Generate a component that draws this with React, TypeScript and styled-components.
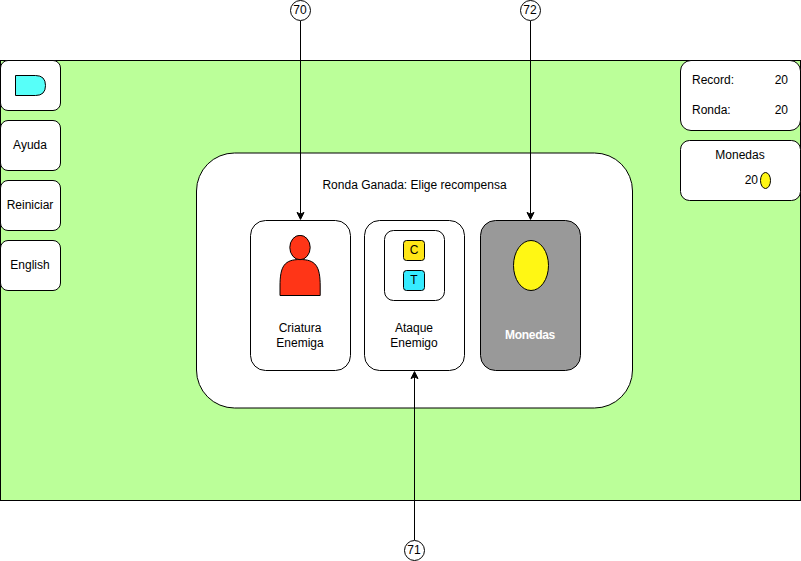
import React from "react";
import styled, { createGlobalStyle, css } from "styled-components";

const GlobalStyle = createGlobalStyle`
  *, *::before, *::after { box-sizing: border-box; }
  body {
    margin: 0;
    background: #fff;
    color: #000;
    font: 12px/15px "Liberation Sans", Arial, Helvetica, sans-serif;
    overflow: hidden;
  }
`;

const Page = styled.main`
  position: relative;
  width: 801px;
  height: 561px;
  padding-top: 60px;
`;

const Board = styled.section`
  display: grid;
  grid-template-columns: 61px 1fr 121px;
  height: 441px;
  background: #bbff99;
  box-shadow: inset 0 0 0 1px #000;
`;

const SideColumn = styled.div<{ $gap: number }>`
  display: flex;
  flex-direction: column;
  gap: ${(p) => p.$gap}px;
`;

const outlined = css`
  border: 1px solid #000;
  background: #fff;
`;

const MenuButton = styled.button`
  ${outlined}
  display: flex;
  align-items: center;
  justify-content: center;
  height: 51px;
  padding: 0 1px 1px 0;
  border-radius: 8px;
  color: inherit;
  font: inherit;
`;

const Panel = styled.div<{ $height: number; $radius: number }>`
  ${outlined}
  display: flex;
  flex-direction: column;
  height: ${(p) => p.$height}px;
  border-radius: ${(p) => p.$radius}px;
`;

const ScoreRow = styled.div`
  display: flex;
  justify-content: space-between;
  padding: 0 12px 0 11px;
  margin-top: 12px;

  & + & {
    margin-top: 15px;
  }
`;

const CoinsTitle = styled.div`
  margin-top: 7px;
  padding-right: 1px;
  text-align: center;
`;

const CoinsCount = styled.div`
  display: flex;
  justify-content: flex-end;
  gap: 2px;
  padding-right: 29px;
  margin-top: 10px;

  svg {
    margin-top: -1px;
  }
`;

const Dialog = styled.div`
  position: relative;
  isolation: isolate;
  width: 437px;
  height: 256px;
  margin: 92px 0 0 135px;
  padding: 26px 0 0 54px;

  &::before {
    ${outlined}
    content: "";
    position: absolute;
    z-index: -1;
    inset: 0;
    border-radius: 38.5px;
    transform: translateY(0.5px);
  }
`;

const DialogTitle = styled.h1`
  width: 331px;
  margin: 0;
  padding-right: 2px;
  font: inherit;
  text-align: center;
`;

const Rewards = styled.div`
  display: grid;
  grid-template-columns: 101px 101px 101px;
  column-gap: 13px;
  margin-top: 27px;
`;

const RewardCard = styled.div<{ $selected?: boolean; $shift?: number }>`
  ${outlined}
  display: flex;
  flex-direction: column;
  align-items: center;
  height: 151px;
  margin-left: ${(p) => p.$shift ?? 0}px;
  margin-right: -${(p) => p.$shift ?? 0}px;
  border-radius: 15.5px;
  ${(p) =>
    p.$selected &&
    css`
      background: #999;
      color: #fff;
      font-weight: bold;
      letter-spacing: -0.3px;
    `}
`;

const RewardArt = styled.div`
  display: flex;
  justify-content: center;
  height: 90px;
`;

const RewardLabel = styled.div<{ $single?: boolean }>`
  display: flex;
  align-items: center;
  justify-content: center;
  width: 60px;
  height: ${(p) => (p.$single ? 47 : 49)}px;
  padding: 1px 1px 0 0;
  text-align: center;
`;

const AttackFrame = styled.div`
  ${outlined}
  display: flex;
  flex-direction: column;
  align-items: center;
  gap: 9px;
  width: 61px;
  height: 71px;
  margin-top: 9px;
  padding-top: 9px;
  border-radius: 9.5px;
`;

const Tile = styled.span<{ $color: string }>`
  border: 1px solid #000;
  border-radius: 3.5px;
  width: 22px;
  height: 21px;
  margin-right: 1px;
  padding-top: 2px;
  background: ${(p) => p.$color};
  text-align: center;
`;

const Callout = styled.div<{ $x: number; $y: number; $up?: boolean }>`
  position: absolute;
  left: ${(p) => p.$x}px;
  top: ${(p) => p.$y}px;
  display: flex;
  flex-direction: ${(p) => (p.$up ? "column-reverse" : "column")};
  width: 21px;
`;

const Marker = styled.span`
  ${outlined}
  display: block;
  width: 21px;
  height: 21px;
  padding-top: 2px;
  border-radius: 50%;
  text-align: center;
  text-indent: -1px;
  white-space: nowrap;
`;

const PotionIcon = () => (
  <svg width="31" height="21" viewBox="0 0 31 21">
    <path
      d="M.5.5H20.5Q30.5.5 30.5 10.5T20.5 20.5H.5Z"
      fill="#57fff9"
      stroke="#000"
    />
  </svg>
);

const Coin = ({ w, h }: { w: number; h: number }) => (
  <svg width={w + 1} height={h + 1}>
    <ellipse
      cx={(w + 1) / 2}
      cy={(h + 1) / 2}
      rx={w / 2}
      ry={h / 2}
      fill="#fff714"
      stroke="#000"
    />
  </svg>
);

const Creature = styled.svg`
  margin-top: 14px;
`;

const LargeCoin = styled.div`
  margin-top: 19px;
`;

const Arrow = ({ length, up }: { length: number; up?: boolean }) => (
  <svg width="21" height={length} viewBox={`0 0 21 ${length}`}>
    <g transform={up ? `translate(0 ${length}) scale(1 -1)` : undefined}>
      <path d={`M10.5 0V${length - 6}`} stroke="#000" />
      <path
        d={`M10.5 ${length - 0.6}l-3.5-7 3.5 1.75 3.5-1.75z`}
        stroke="#000"
        strokeMiterlimit="10"
      />
    </g>
  </svg>
);

export default function App() {
  return (
    <>
      <GlobalStyle />
      <Page>
        <Board>
          <SideColumn $gap={9}>
            <MenuButton>
              <PotionIcon />
            </MenuButton>
            <MenuButton>Ayuda</MenuButton>
            <MenuButton>Reiniciar</MenuButton>
            <MenuButton>English</MenuButton>
          </SideColumn>
          <Dialog>
            <DialogTitle>Ronda Ganada: Elige recompensa</DialogTitle>
            <Rewards>
              <RewardCard>
                <RewardArt>
                  <Creature width="43" height="62" viewBox="0 0 43 62">
                    <g fill="#ff3517" stroke="#000">
                      <path d="M1 60.5V51C1 31 5.5 24.500 21 24.500S41.200 31 41.200 51V60.5Z" />
                      <ellipse cx="21" cy="12.500" rx="10.200" ry="12.200" />
                    </g>
                  </Creature>
                </RewardArt>
                <RewardLabel>Criatura Enemiga</RewardLabel>
              </RewardCard>
              <RewardCard>
                <RewardArt>
                  <AttackFrame>
                    <Tile $color="#ffe617">C</Tile>
                    <Tile $color="#36ebff">T</Tile>
                  </AttackFrame>
                </RewardArt>
                <RewardLabel>Ataque Enemigo</RewardLabel>
              </RewardCard>
              <RewardCard $selected $shift={2}>
                <RewardArt>
                  <LargeCoin>
                    <Coin w={35} h={50} />
                  </LargeCoin>
                </RewardArt>
                <RewardLabel $single>Monedas</RewardLabel>
              </RewardCard>
            </Rewards>
          </Dialog>
          <SideColumn $gap={9}>
            <Panel $height={71} $radius={11}>
              <ScoreRow>
                <span>Record:</span>
                <span>20</span>
              </ScoreRow>
              <ScoreRow>
                <span>Ronda:</span>
                <span>20</span>
              </ScoreRow>
            </Panel>
            <Panel $height={61} $radius={9.5}>
              <CoinsTitle>Monedas</CoinsTitle>
              <CoinsCount>
                <span>20</span>
                <Coin w={10} h={16} />
              </CoinsCount>
            </Panel>
          </SideColumn>
        </Board>
        <Callout $x={290} $y={0}>
          <Marker>70</Marker>
          <Arrow length={199} />
        </Callout>
        <Callout $x={520} $y={0}>
          <Marker>72</Marker>
          <Arrow length={199} />
        </Callout>
        <Callout $x={404} $y={371} $up>
          <Marker>71</Marker>
          <Arrow length={169} up />
        </Callout>
      </Page>
    </>
  );
}
